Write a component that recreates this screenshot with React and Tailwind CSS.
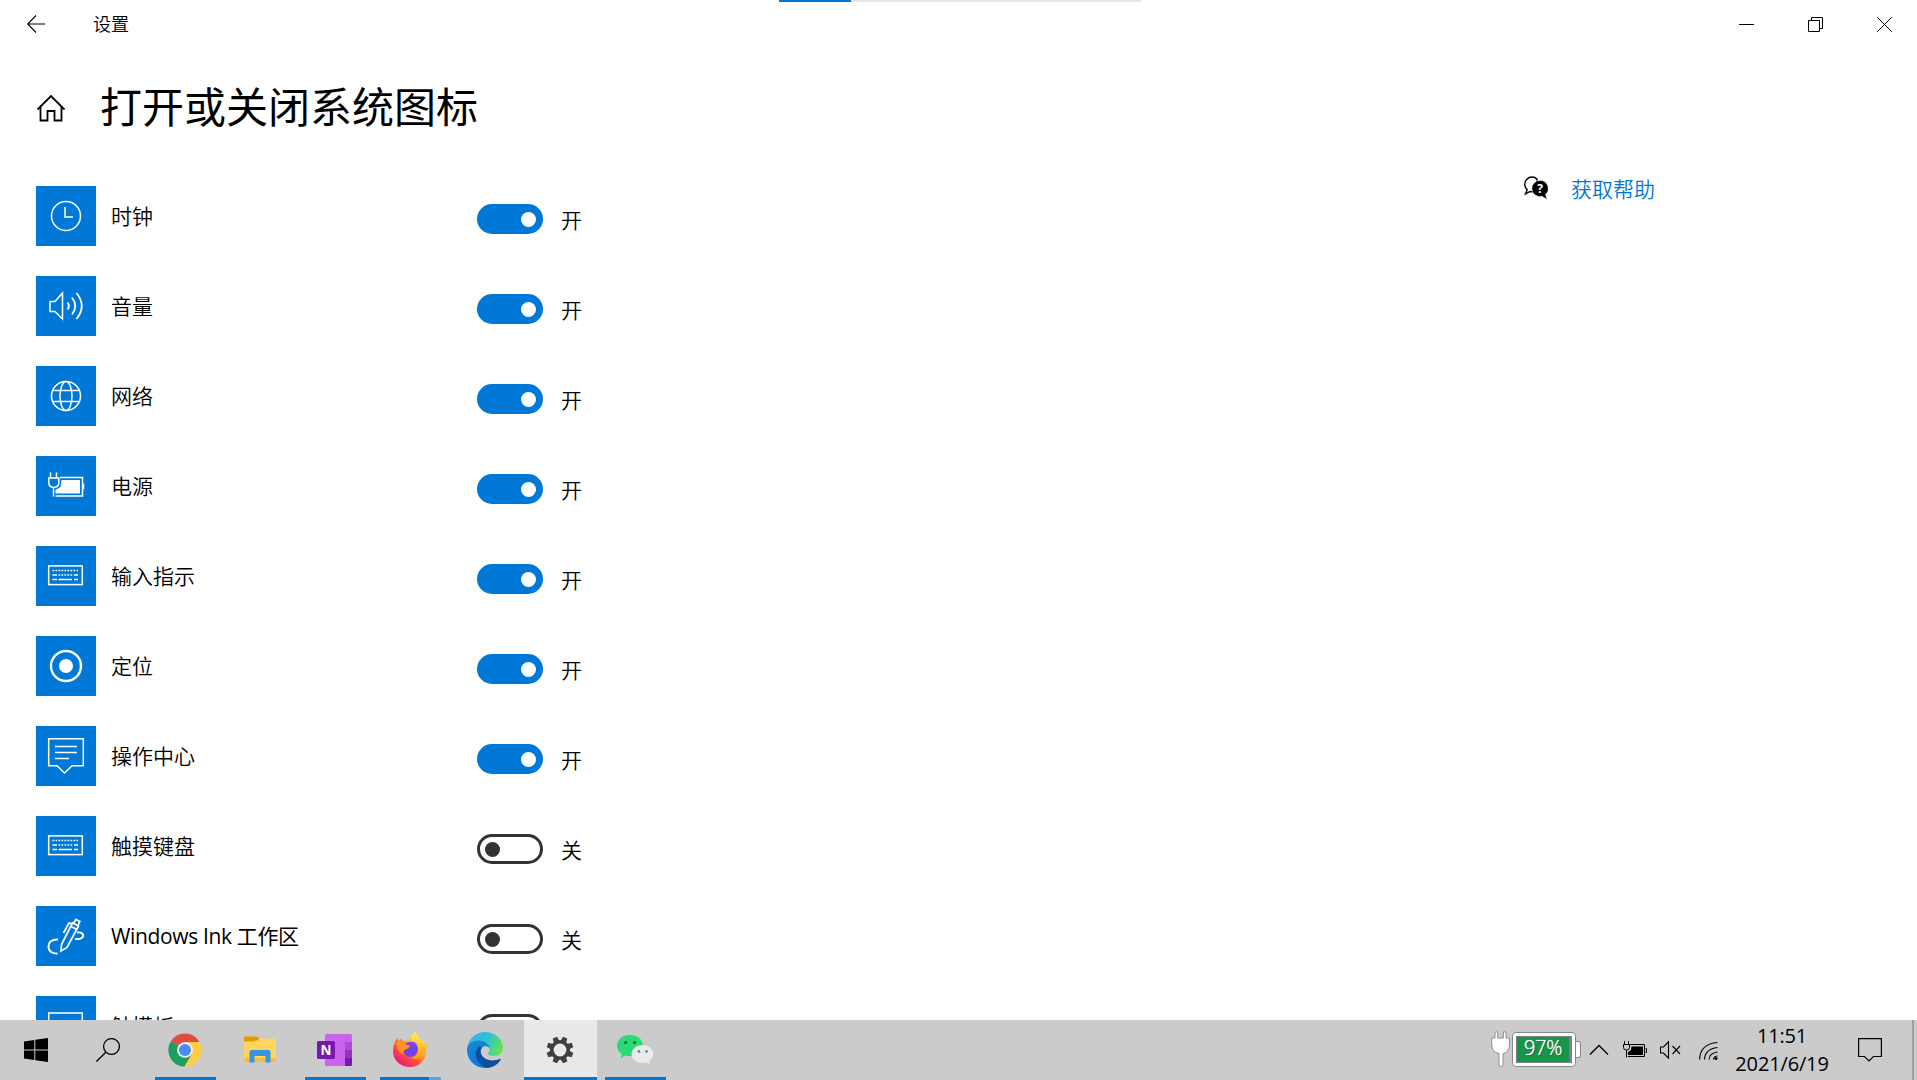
import React from 'react';

const TileIcon = ({ children }) => (
  <svg width="60" height="60" viewBox="0 0 60 60" fill="none" stroke="#fff" strokeWidth="1.5">
    {children}
  </svg>
);

const ClockIcon = () => (
  <TileIcon>
    <circle cx="30" cy="30" r="14.5" />
    <path d="M29 21v10h8" />
  </TileIcon>
);

const VolumeIcon = () => (
  <TileIcon>
    <path d="M14 25.500h5L26.500 17v26L19 35.500h-5z" />
    <path d="M31.500 26.500q2.800 3.500 0 7M36 21.500q6.500 8.500 0 17M40.500 17q10.500 13 0 26" strokeWidth="1.8" />
  </TileIcon>
);

const GlobeIcon = () => (
  <TileIcon>
    <circle cx="30" cy="30" r="14.5" />
    <ellipse cx="30" cy="30" rx="6" ry="14.5" />
    <path d="M17 24.500h26M17 35.500h26" />
  </TileIcon>
);

const PowerIcon = () => (
  <TileIcon>
    <path d="M24 21.500h22.500v18.500H19.500" />
    <path d="M46.500 28.500h1v4h-1" />
    <path d="M25.500 24h18.500v13.500H19.500v-3.500l5-3z" fill="#fff" stroke="none" />
    <path d="M14.500 16.500v5M20.500 16.500v5M12.800 22h10v5q0 4-5 4.500q-5-.5-5-4.500zM17.500 31v9.500" />
  </TileIcon>
);

const KeyboardIcon = () => (
  <TileIcon>
    <rect x="12.7" y="19.900" width="33.600" height="18.700" />
    <path d="M16.500 24.500H42M22.500 29H37" strokeDasharray="1.700 1.300" />
    <path d="M16.500 29H21M38 29h4M16.500 33.500H21M22.500 33.500H36M38 33.500h4" />
  </TileIcon>
);

const LocationIcon = () => (
  <TileIcon>
    <circle cx="30" cy="30" r="15" strokeWidth="2.400" />
    <circle cx="30" cy="30" r="7" fill="#fff" stroke="none" />
  </TileIcon>
);

const ActionCenterIcon = () => (
  <TileIcon>
    <path d="M12.700 12.700h34.600v27H36L28.500 47l-7.500-7.300h-8.300z" />
    <path d="M19 20.500h22M19 26.500h22M19 32.500h14" />
  </TileIcon>
);

const InkIcon = () => (
  <TileIcon>
    <path d="M25 45l.5-6.500L36.500 17l6 3L31 41.500 25 45zM35 20.500l6 3M38 17l1.800-3.500 4 2-1.800 4M35.500 17.500l-2.500-.5-5.500 10" strokeWidth="1.700" />
    <path d="M22 33.500c-6.500-.3-9.500 2.500-9.500 7 0 5 4 7.500 9 7M41 26.500c7-1 8.500 5.300 2 6.500h-4" strokeWidth="1.900" />
  </TileIcon>
);

const TouchpadIcon = () => (
  <TileIcon>
    <rect x="12.700" y="17" width="33.600" height="26" />
    <path d="M12.700 36h33.600M29.500 36v7" />
  </TileIcon>
);

const items = [
  { label: '时钟', icon: ClockIcon, on: true },
  { label: '音量', icon: VolumeIcon, on: true },
  { label: '网络', icon: GlobeIcon, on: true },
  { label: '电源', icon: PowerIcon, on: true },
  { label: '输入指示', icon: KeyboardIcon, on: true },
  { label: '定位', icon: LocationIcon, on: true },
  { label: '操作中心', icon: ActionCenterIcon, on: true },
  { label: '触摸键盘', icon: KeyboardIcon, on: false },
  { label: 'Windows Ink 工作区', icon: InkIcon, on: false, latin: true },
  { label: '触摸板', icon: TouchpadIcon, on: false },
];

function Toggle({ on }) {
  return on ? (
    <div className="w-[66px] h-[30px] rounded-full bg-[#0078d7] flex items-center justify-end pr-[7px]">
      <div className="w-[15px] h-[15px] rounded-full bg-white" />
    </div>
  ) : (
    <div className="w-[66px] h-[30px] rounded-full border-[3px] border-[#333333] flex items-center pl-[5px]">
      <div className="w-[15px] h-[15px] rounded-full bg-[#333333]" />
    </div>
  );
}

function SettingRow({ item }) {
  const Icon = item.icon;
  return (
    <div className="flex h-[60px] shrink-0">
      <div className="w-[60px] h-[60px] bg-[#0078d7]">
        <Icon />
      </div>
      <div className="w-[381px] pl-[15px] flex items-center text-[21px] leading-[30px]">
        <span className={item.latin ? 'font-normal tracking-[-0.35px]' : ''}>{item.label}</span>
      </div>
      <div className="flex items-center h-[30px] mt-[18px]">
        <Toggle on={item.on} />
        <span className="ml-[18px] mt-[1px] text-[21px] leading-[30px]">{item.on ? '开' : '关'}</span>
      </div>
    </div>
  );
}

function TitleBar() {
  return (
    <div className="flex items-center justify-between h-12 pl-[27px] pr-[25px]">
      <div className="flex items-center">
        <svg width="18" height="18" viewBox="0 0 18 18" fill="none" stroke="#000" strokeWidth="1.1">
          <path d="M9 .5L.7 9 9 17.500M.7 9H18" />
        </svg>
        <span className="ml-12 text-[18px] leading-6">设置</span>
      </div>
      <div className="flex items-center gap-[54px] text-black">
        <svg width="15" height="15" viewBox="0 0 15 15">
          <path d="M0 7.500h15" stroke="currentColor" />
        </svg>
        <svg width="15" height="15" viewBox="0 0 15 15" fill="none" stroke="currentColor">
          <path d="M.5 3.500h11v11H.5zM3.500 3.500v-3h11v11h-3" />
        </svg>
        <svg width="15" height="15" viewBox="0 0 15 15" fill="none" stroke="currentColor">
          <path d="M.2.2l14.600 14.600M14.800.2L.2 14.800" />
        </svg>
      </div>
    </div>
  );
}

const StartIcon = () => (
  <svg width="24" height="24" viewBox="0 0 24 24">
    <path d="M0 3.400L10.300 2v9.500H0zM11.300 1.800L24 0v11.500H11.300zM0 12.500h10.300V22L0 20.600zM11.300 12.500H24V24l-12.700-1.800z" />
  </svg>
);

const SearchIcon = () => (
  <svg width="24" height="24" viewBox="0 0 24 24" fill="none" stroke="#000" strokeWidth="1.300">
    <circle cx="15.500" cy="8.500" r="7.900" />
    <path d="M9.800 14.200L.4 23.600" />
  </svg>
);

const ChromeIcon = () => (
  <svg width="34" height="34" viewBox="0 0 34 34">
    <path d="M17 17L2.700 8.500A16.600 16.600 0 0 1 31.500 9z" fill="#dc4e41" />
    <path d="M2.700 8.500A16.600 16.600 0 0 0 16.500 33.600L24 21l-7-4z" fill="#1aa15f" />
    <path d="M31.500 9H17l7 12-7.500 12.600A16.600 16.600 0 0 0 31.500 9z" fill="#ffce44" />
    <circle cx="17" cy="17" r="7.800" fill="#f4f4f4" />
    <circle cx="17" cy="17" r="6.100" fill="#4c8bf5" />
  </svg>
);

const ExplorerIcon = () => (
  <svg width="32" height="27" viewBox="0 0 32 27">
    <path d="M0 1.500Q0 .5 1 .5h8.500L15 2.500h16q1 0 1 1V25q0 1-1 1H1q-1 0-1-1z" fill="#ffd55f" />
    <path d="M0 1.500Q0 .5 1 .5h9L14.500 1v3.500h-3L10 5.500H0z" fill="#df9c00" />
    <path d="M0 22h32v3q0 1-1 1H1q-1 0-1-1z" fill="#fbbd35" />
    <path d="M5.500 26.500V16q0-2 2-2h17q2 0 2 2v10.500h-5V20h-11v6.500z" fill="#3795df" />
  </svg>
);

const OneNoteIcon = () => (
  <svg width="35" height="34" viewBox="0 0 35 34">
    <rect x="8" y="1" width="27" height="32" rx="1.500" fill="#ca64ea" />
    <path d="M28 9h7v8h-7z" fill="#ae4bd5" />
    <path d="M28 17h7v8h-7z" fill="#9332bf" />
    <path d="M28 25h7v6.500q0 1.500-1.500 1.500H28z" fill="#7719aa" />
    <rect x="0" y="8" width="18" height="18" rx="1.500" fill="#7719aa" />
    <text x="9" y="22" fill="#fff" fontSize="13.500" fontWeight="700" textAnchor="middle" fontFamily="Open Sans, sans-serif">N</text>
  </svg>
);

const FirefoxIcon = () => (
  <svg width="34" height="36" viewBox="0 0 34 36">
    <defs>
      <linearGradient id="fxBody" x1=".85" y1=".1" x2=".2" y2=".95">
        <stop offset="0" stopColor="#fff44f" />
        <stop offset=".35" stopColor="#ffa92c" />
        <stop offset=".65" stopColor="#ff4f3a" />
        <stop offset="1" stopColor="#e8177a" />
      </linearGradient>
      <linearGradient id="fxTail" x1="0" y1="0" x2="0" y2="1">
        <stop offset="0" stopColor="#fff44f" />
        <stop offset="1" stopColor="#ff980e" />
      </linearGradient>
    </defs>
    <path d="M3.500 6L6 9l2.500-3 1.500 3 6-.5L18 4l4.500-4 1.500 4 6.500 5.500L33 15c2 10-5 20-16 20C7 35 0 27.500 0 19.500 0 14 2 10 3.500 6z" fill="url(#fxBody)" />
    <circle cx="17.500" cy="17.500" r="7.500" fill="#7542e5" />
    <path d="M17 11q5-4 8.500 2l-3-.5q-3-1.500-5.500-1.500z" fill="#b833e1" />
    <path d="M22.500 0q-7 5-3.500 9 7 2 6.500 9-.5 7-8 7.500 8 4 13-2Q35 17 33 10l-3 1-5-6z" fill="url(#fxTail)" />
    <path d="M2 11l5-2 4 3 6 1.500q-1 3-5 4-2 1.500-1.500 5Q4 20 4 14z" fill="#ff9220" />
  </svg>
);

const EdgeIcon = () => (
  <svg width="36" height="36" viewBox="0 0 36 36">
    <defs>
      <linearGradient id="edgeTop" x1="0" y1=".3" x2="1" y2=".6">
        <stop offset="0" stopColor="#36b5ef" />
        <stop offset=".5" stopColor="#2bc3d2" />
        <stop offset="1" stopColor="#66e44e" />
      </linearGradient>
      <linearGradient id="edgeLeft" x1="0" y1="0" x2=".4" y2="1">
        <stop offset="0" stopColor="#1b86d2" />
        <stop offset="1" stopColor="#0a78dc" />
      </linearGradient>
    </defs>
    <path d="M.3 15.500C2 6 9 0 18 0c10.500 0 18 7.500 18 15.500 0 5-4 8.500-9 8.500-4 0-6-1.500-6-2.500s2-2 1.500-5C21 9 5 6 .3 15.500z" fill="url(#edgeTop)" />
    <path d="M0 18C0 11.500 6 8.500 11.500 8.500c7 0 11 4.500 11 7.500-2-2.500-6-2.500-8 0-6 8.500 0 17 7.500 19.500C10 38 0 29 0 18z" fill="url(#edgeLeft)" />
    <path d="M12.500 14.500C6 20 8 32 20 35.800c5 .2 10.500-3 13.500-7.800.5-1-.3-1.500-1.200-1C23 31 13.800 26 13.800 19.500c0-1.600.4-3 1.200-4z" fill="#0d4f9c" />
  </svg>
);

const GearIcon = () => (
  <svg width="28" height="28" viewBox="-14 -14 28 28">
    <g fill="#404040">
      {[22.5, 67.5, 112.5, 157.5, 202.5, 247.5, 292.5, 337.5].map((a) => (
        <path key={a} d="M-3-8.500L-2.300-13.500h4.600L3-8.500z" transform={`rotate(${a})`} />
      ))}
    </g>
    <circle r="8.200" fill="none" stroke="#404040" strokeWidth="3.600" />
  </svg>
);

const WeChatIcon = () => (
  <svg className="ml-[2px]" width="37" height="30" viewBox="0 0 37 30">
    <path d="M13 0C5.500 0 0 4.700 0 10.700c0 3.500 1.800 6.200 4.800 8.200L4 23l4.500-2.500q2 .6 4.500.6c7.500 0 13-4.500 13-10.400S20.500 0 13 0z" fill="#2bd975" />
    <path d="M25.500 10C19.500 10 14.500 14 14.500 19s5 9 11 9q2 0 4-.6l3.500 1.900-1-3.200c2.700-1.800 4.300-4.100 4.300-7.100 0-5-4.800-9-10.800-9z" fill="#e8eaeb" />
    <g fill="#14713f">
      <circle cx="8.700" cy="7.500" r="1.600" />
      <circle cx="17.500" cy="7.500" r="1.600" />
    </g>
    <g fill="#808385">
      <circle cx="22" cy="16.500" r="1.400" />
      <circle cx="29.500" cy="16.500" r="1.400" />
    </g>
  </svg>
);

const apps = [
  { name: 'chrome', icon: ChromeIcon, open: true },
  { name: 'explorer', icon: ExplorerIcon, open: false },
  { name: 'onenote', icon: OneNoteIcon, open: true },
  { name: 'firefox', icon: FirefoxIcon, open: true, stacked: true },
  { name: 'edge', icon: EdgeIcon, open: false },
  { name: 'settings', icon: GearIcon, open: true, active: true },
  { name: 'wechat', icon: WeChatIcon, open: true },
];

function AppButton({ app }) {
  const Icon = app.icon;
  return (
    <div className={app.active ? 'w-[73px] mx-[1px] h-full flex flex-col bg-[#e9e9e9]' : 'w-[75px] px-[7px] h-full flex flex-col'}>
      <div className="flex-1 flex items-center justify-center pr-[2px] pb-px">
        <Icon />
      </div>
      <div className="h-[3px] -mt-[3px] flex">
        {app.open && <div className="flex-1 bg-[#0078d7]" />}
        {app.stacked && <div className="w-3 bg-[#5fa3dc]" />}
      </div>
    </div>
  );
}

function BatteryWidget() {
  return (
    <div className="flex items-center -mt-[2px]">
      <svg width="20" height="36" viewBox="0 0 20 36">
        <path d="M4 7V2q0-1.300 1.300-1.300T6.700 2v5h5.600V2q0-1.300 1.400-1.300T15 2v5h3.500v6q0 8.500-6.500 9.500v11q0 2-2 2t-2-2v-11Q.7 21.500.7 13V7z" fill="#fff" stroke="#909090" />
      </svg>
      <div className="w-[64px] h-[35px] ml-px rounded-[4px] border border-[#888888] bg-white p-[3px]">
        <div className="h-full border border-[#808080] bg-[#149748] border-r-[3px] flex items-center justify-center text-white text-[20px] leading-none pb-[2px] tracking-[-0.3px] [text-shadow:0_0_1px_#fff,1px_1px_1px_#444]">
          97%
        </div>
      </div>
      <div className="w-[5px] h-[17px] rounded-r-[3px] border border-l-0 border-[#888888] bg-white" />
    </div>
  );
}

function Tray() {
  return (
    <div className="flex items-center h-full">
      <BatteryWidget />
      <svg className="ml-[8px]" width="20" height="12" viewBox="0 0 20 12" fill="none" stroke="#000" strokeWidth="1.300">
        <path d="M1 10.500l9-9 9 9" />
      </svg>
      <svg className="ml-[14px] -mt-px" width="24" height="18" viewBox="0 0 24 18" fill="none" stroke="#000">
        <path d="M7 3.500h14.500v12H5M22.500 7.500h1v4h-1" />
        <path d="M8.500 5.500H20v8.500H5v-3l3-2z" fill="#000" stroke="none" />
        <path d="M1.500 0v3M5.500 0v3M.5 3.500h6v3q0 2.500-3 2.500t-3-2.500zM3.500 9v7.500" />
      </svg>
      <svg className="ml-[13px]" width="22" height="18" viewBox="0 0 22 18" fill="none" stroke="#000" strokeWidth="1.100">
        <path d="M.5 6h3L8.500.8v16.400L3.500 12h-3zM12.500 5l7.500 8M20 5l-7.500 8" />
      </svg>
      <svg className="ml-[17px] mt-[2px]" width="20" height="20" viewBox="0 0 20 20" fill="none" stroke="#000" strokeWidth="1.100">
        <path d="M.6 18.500Q1 3 18.500 1.500M5.500 18.500Q6 8 18.500 6.500M10 18.500q.5-6.500 8.500-7.500M14.500 18.500q0-3 4-3.500" />
        <circle cx="17" cy="17.500" r="1.600" fill="#000" stroke="none" />
      </svg>
      <div className="w-[94px] ml-[16px] mr-px text-center font-normal text-[20px] leading-[28px] tracking-[-0.15px] whitespace-nowrap">
        <div>11:51</div>
        <div>2021/6/19</div>
      </div>
      <svg className="ml-[28px] mr-[30px]" width="24" height="24" viewBox="0 0 24 24" fill="none" stroke="#000" strokeWidth="1.200">
        <path d="M.6.6h22.800v17.900h-8L11 23l-4.500-4.500H.6z" />
      </svg>
      <div className="w-[2px] h-full mr-[3px] bg-[#a0a0a0]" />
    </div>
  );
}

function Taskbar() {
  return (
    <footer className="h-[60px] shrink-0 bg-[#cbcbcb] flex items-center justify-between">
      <div className="flex items-center h-full">
        <div className="w-[72px] flex justify-center"><StartIcon /></div>
        <div className="w-[76px] pl-[24px]"><SearchIcon /></div>
        {apps.map((app) => (
          <AppButton key={app.name} app={app} />
        ))}
      </div>
      <Tray />
    </footer>
  );
}

export default function App() {
  return (
    <div className="w-[1917px] h-[1080px] bg-white text-black overflow-hidden flex flex-col relative font-[350] font-['Open_Sans','Noto_Sans_CJK_SC',sans-serif]">
      {/* Loading strip over the title bar */}
      <div className="absolute top-0 left-[779px] w-[362px] h-[2px] bg-[#e5e5e5]">
        <div className="w-[72px] h-full bg-[#0078d7]" />
      </div>

      <TitleBar />

      <main className="flex-1 min-h-0 overflow-hidden">
        <div className="flex items-center h-[120px] pl-9">
          <svg width="30" height="28" viewBox="0 0 30 28" fill="none" stroke="#000" strokeWidth="1.800">
            <path d="M1.500 15.500L15 2l13.500 13.500M4.500 13v13.500h7V17h7v9.500h7V13" />
          </svg>
          <h1 className="ml-[34px] -mt-[2px] text-[42px] leading-[60px] font-normal">打开或关闭系统图标</h1>
        </div>

        <div className="flex pl-9">
          <section className="w-[1488px] flex flex-col gap-[30px] pt-[18px]">
            {items.map((item) => (
              <SettingRow key={item.label} item={item} />
            ))}
          </section>
          <aside className="flex items-center h-[30px] mt-[6px]">
            <svg className="-mt-[2px]" width="24" height="24" viewBox="0 0 24 24">
              <path d="M8 1C4 1 .7 4.300.7 8.300c0 2.300 1 4.200 2.500 5.500L1.500 18l4.500-2.500q4 .8 7-1.500V3Q11 1 8 1z" fill="#fff" stroke="#000" strokeWidth="1.400" />
              <path d="M16 4.500a8 8 0 1 0 2 15.700l5 3.300-1.500-5A8 8 0 0 0 16 4.500z" stroke="#fff" strokeWidth=".5" />
              <text x="16" y="17" fill="#fff" fontSize="12" fontWeight="700" textAnchor="middle">?</text>
            </svg>
            <a className="ml-[23px] text-[21px] leading-[30px] text-[#0078d7]">获取帮助</a>
          </aside>
        </div>
      </main>

      <Taskbar />
    </div>
  );
}
